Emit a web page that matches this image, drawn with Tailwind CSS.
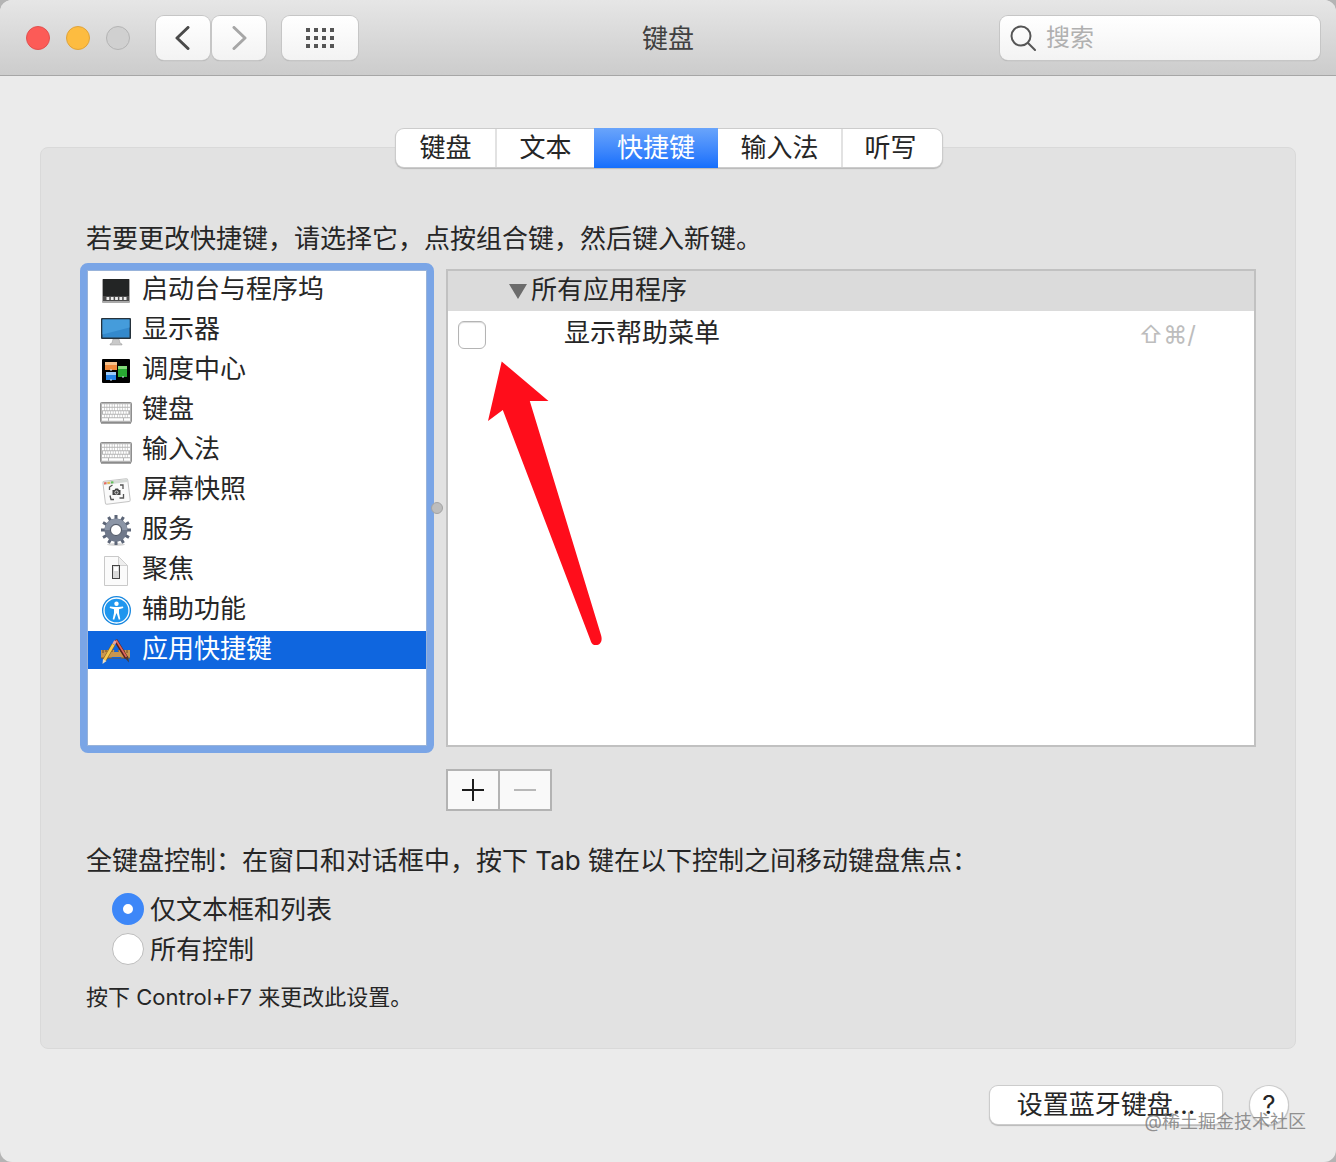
<!DOCTYPE html>
<html lang="zh-CN">
  <head>
    <meta charset="UTF-8" />
    <meta name="viewport" content="width=device-width, initial-scale=1.0" />
    <title>键盘</title>
    <!-- Tailwind CSS -->
    <script src="https://cdn.jsdelivr.net/npm/@tailwindcss/browser@4"></script>
  </head>
  <body class="bg-[#b4b4b4] font-['Inter','Noto_Sans_CJK_SC',sans-serif] text-[26px] leading-10 text-[#262626]">
    <div class="relative flex min-h-screen flex-col overflow-hidden rounded-xl bg-[#ebebeb]">
      <!-- Title bar -->
      <header class="grid h-[76px] grid-cols-[1fr_auto_1fr] items-center border-b border-[#a6a6a6] bg-linear-to-b from-[#e6e6e6] to-[#cccccc] px-4 pt-px">
        <div class="ml-[10px] flex items-center">
          <div class="flex gap-4">
            <button aria-label="关闭" class="size-6 rounded-full border border-[#e2504f] bg-[#fc5b57]"></button>
            <button aria-label="最小化" class="size-6 rounded-full border border-[#e0a33a] bg-[#fdbc40]"></button>
            <button aria-label="缩放" disabled class="size-6 rounded-full border border-[#b4b4b4] bg-[#d0d0d0]"></button>
          </div>
          <div class="ml-[26px] flex gap-[2px]">
            <button aria-label="后退" class="flex h-11 w-[54px] items-center justify-center rounded-lg bg-linear-to-b from-white to-[#f3f3f3] shadow-[0_0_0_1px_#c6c6c6,0_1px_1px_0_#a0a0a0]">
              <svg class="size-6" viewBox="0 0 24 24" fill="none" stroke="#4a4a4a" stroke-width="3" stroke-linecap="round" stroke-linejoin="round"><path d="M17 1.500 6 12l11 10.500" /></svg>
            </button>
            <button aria-label="前进" disabled class="flex h-11 w-[54px] items-center justify-center rounded-lg bg-linear-to-b from-white to-[#f3f3f3] shadow-[0_0_0_1px_#c6c6c6,0_1px_1px_0_#a0a0a0]">
              <svg class="size-6" viewBox="0 0 24 24" fill="none" stroke="#a6a6a6" stroke-width="3" stroke-linecap="round" stroke-linejoin="round"><path d="m7 1.500 11 10.500L7 22.500" /></svg>
            </button>
          </div>
          <button aria-label="显示全部" class="ml-4 flex h-11 w-[76px] items-center justify-center rounded-lg bg-linear-to-b from-white to-[#f3f3f3] shadow-[0_0_0_1px_#c6c6c6,0_1px_1px_0_#a0a0a0]">
            <svg class="h-5 w-7" viewBox="0 0 28 20" fill="#555555">
              <path d="M0 0h4v4H0zM8 0h4v4H8zM16 0h4v4h-4zM24 0h4v4h-4zM0 8h4v4H0zM8 8h4v4H8zM16 8h4v4h-4zM24 8h4v4h-4zM0 16h4v4H0zM8 16h4v4H8zM16 16h4v4h-4zM24 16h4v4h-4z" />
            </svg>
          </button>
        </div>
        <h1 class="pt-[2px] text-[#404040]">键盘</h1>
        <label class="flex h-11 w-80 items-center gap-[10px] justify-self-end rounded-lg bg-linear-to-b from-white to-[#f3f3f3] pl-[10px] shadow-[0_0_0_1px_#c6c6c6,0_1px_1px_0_#a0a0a0]">
          <svg class="size-[26px] shrink-0" viewBox="0 0 26 26" fill="none" stroke="#555555" stroke-width="2"><circle cx="11" cy="11" r="9.500" /><path d="m18 18 7 7" stroke-linecap="round" /></svg>
          <input type="search" placeholder="搜索" aria-label="搜索" class="w-full min-w-0 bg-transparent text-[24px] leading-9 outline-none placeholder:text-[#b0b0b0]" />
        </label>
      </header>

      <main class="px-10 pt-[53px]">
        <!-- Tabs -->
        <div role="tablist" class="relative z-10 flex justify-center pl-[2px]">
          <div class="flex h-[38px] rounded-lg bg-white leading-[38px] shadow-[0_0_0_1px_#cccccc,0_1px_1px_1px_#b8b8b8]">
            <button role="tab" class="w-[101px] border-r-2 border-[#e2e2e2]">键盘</button>
            <button role="tab" class="w-[97px]">文本</button>
            <button role="tab" aria-selected="true" class="-my-px w-[124px] bg-linear-to-b from-[#69a4fb] to-[#136efc] text-white">快捷键</button>
            <button role="tab" class="w-[125px] border-r-2 border-[#e2e2e2]">输入法</button>
            <button role="tab" class="w-[99px] pr-1">听写</button>
          </div>
        </div>

        <section class="-mt-5 rounded-lg border border-[#d9d9d9] bg-[#e2e2e2] px-[39px] pt-[71px] pb-[31px]">
          <p class="pl-[6px]">若要更改快捷键，请选择它，点按组合键，然后键入新键。</p>

          <div class="mt-1 flex">
            <!-- Category list -->
            <div class="h-[490px] w-[354px] shrink-0 rounded-lg border-[7px] border-[#7aa5e6]">
              <ul class="flex h-full flex-col gap-[2px] border border-[#98b3da] bg-white">
                <li>
                  <button class="flex h-[38px] w-full items-center gap-[10px] pl-3">
                    <svg class="size-8" viewBox="0 0 32 32">
                      <rect x="2" y="5" width="28" height="24" rx="1" fill="#a9a9a9" />
                      <rect x="3" y="5" width="26" height="22" fill="#232525" />
                      <path d="M3 22h26v5H3z" fill="#4c4c4c" />
                      <path d="M6.500 24.500h20" stroke="#eeeeee" stroke-width="3" stroke-dasharray="2.800 1.500" />
                    </svg>
                    <span class="pb-[2px]">启动台与程序坞</span>
                  </button>
                </li>
                <li>
                  <button class="flex h-[38px] w-full items-center gap-[10px] pl-3">
                    <svg class="size-8" viewBox="0 0 32 32">
                      <path d="M13 25h6l1 4 2 1v1H10v-1l2-1z" fill="#c9c9c9" stroke="#999999" stroke-width=".5" />
                      <rect x="1" y="4" width="30" height="21" rx="1" fill="#26323b" />
                      <path d="M2.500 5.500h27v18h-27z" fill="#3389cc" />
                      <path d="M2.500 5.500h27v8l-27 7z" fill="#459cdb" />
                    </svg>
                    <span class="pb-[2px]">显示器</span>
                  </button>
                </li>
                <li>
                  <button class="flex h-[38px] w-full items-center gap-[10px] pl-3">
                    <svg class="size-8" viewBox="0 0 32 32">
                      <rect x="2" y="5" width="28" height="24" rx="1" fill="#000000" />
                      <path d="M5 8h12v8H5z" fill="#ef8a3c" /><path d="M5 8h12v3H5z" fill="#f5c08b" />
                      <path d="M6 18h10v8H6z" fill="#2684e8" /><path d="M6 18h10v3H6z" fill="#9ccbfa" />
                      <path d="M18 12h9v11h-9z" fill="#28a832" /><path d="M18 12h9v3h-9z" fill="#85db7b" />
                      <path d="M10 15.500h2v1h-2zM10 25.500h2v1h-2zM22 22.500h2v1h-2z" fill="#d6e6f5" />
                    </svg>
                    <span class="pb-[2px]">调度中心</span>
                  </button>
                </li>
                <li>
                  <button class="flex h-[38px] w-full items-center gap-[10px] pl-3">
                    <svg class="size-8" viewBox="0 0 32 32">
                      <rect x=".5" y="8.500" width="31" height="20" rx="1" fill="#b5b5b5" stroke="#8f8f8f" />
                      <path d="M1 29h30" stroke="#8a8a8a" stroke-width="1.500" />
                      <path d="M2 11.500h28M2 15h28M3 18.500h26M2 22h28" stroke="#ffffff" stroke-width="2.400" stroke-dasharray="2 .6" />
                      <path d="M2 25.500h6m1 0h14m1 0h6" stroke="#ffffff" stroke-width="2.400" />
                    </svg>
                    <span class="pb-[2px]">键盘</span>
                  </button>
                </li>
                <li>
                  <button class="flex h-[38px] w-full items-center gap-[10px] pl-3">
                    <svg class="size-8" viewBox="0 0 32 32">
                      <rect x=".5" y="8.500" width="31" height="20" rx="1" fill="#b5b5b5" stroke="#8f8f8f" />
                      <path d="M1 29h30" stroke="#8a8a8a" stroke-width="1.500" />
                      <path d="M2 11.500h28M2 15h28M3 18.500h26M2 22h28" stroke="#ffffff" stroke-width="2.400" stroke-dasharray="2 .6" />
                      <path d="M2 25.500h6m1 0h14m1 0h6" stroke="#ffffff" stroke-width="2.400" />
                    </svg>
                    <span class="pb-[2px]">输入法</span>
                  </button>
                </li>
                <li>
                  <button class="flex h-[38px] w-full items-center gap-[10px] pl-3">
                    <svg class="size-8" viewBox="0 0 32 32" fill="none">
                      <g transform="rotate(-7 16 17)">
                        <rect x="4" y="6" width="25" height="23" rx="1.500" fill="#fafafa" stroke="#c4c4c4" />
                        <path d="M4.500 6.500h24v3h-24z" fill="#d5d9d6" />
                        <path d="M5 8h2.500" stroke="#ea6a5e" stroke-width="2" /><path d="M8.500 8H11" stroke="#e5ba50" stroke-width="2" /><path d="M12 8h2.500" stroke="#5fc058" stroke-width="2" />
                      </g>
                      <path d="M9.500 16v-3l3-2M20 11h3v4M23.500 20v4h-4M14 25.500h-3l-1-4" stroke="#555555" stroke-width="1.300" />
                      <path d="M12.500 16h2l1-1.500h2.500l1 1.500h1.500v5h-8z" fill="#444444" />
                      <circle cx="16.500" cy="18.500" r="1.600" stroke="#dddddd" />
                    </svg>
                    <span class="pb-[2px]">屏幕快照</span>
                  </button>
                </li>
                <li>
                  <button class="flex h-[38px] w-full items-center gap-[10px] pl-3">
                    <svg class="size-8" viewBox="0 0 32 32" fill="none">
                      <ellipse cx="16" cy="30.500" rx="9" ry="1.500" fill="#d5d5d5" />
                      <!-- Gear teeth, mirrored through the hub -->
                      <g stroke="#5c6577" stroke-width="3">
                        <path d="M16 1v30M1 16h30" />
                        <path d="M16 1v30M1 16h30" transform="rotate(30 16 16)" />
                        <path d="M16 1v30M1 16h30" transform="rotate(60 16 16)" />
                      </g>
                      <circle cx="16" cy="16" r="8.500" stroke="#6f788a" stroke-width="6" />
                      <path d="M7.300 16a8.700 8.700 0 0 1 17.400 0" stroke="#8b95a6" stroke-width="5" />
                      <circle cx="16" cy="16" r="5.500" fill="#ffffff" stroke="#4d5563" />
                    </svg>
                    <span class="pb-[2px]">服务</span>
                  </button>
                </li>
                <li>
                  <button class="flex h-[38px] w-full items-center gap-[10px] pl-3">
                    <svg class="size-8" viewBox="0 0 32 32">
                      <path d="M4.500 2.500h14l9 9v20h-23z" fill="#fbfbfb" stroke="#c9c9c9" />
                      <path d="M18.500 2.500v9h9z" fill="#eeeeee" stroke="#cfcfcf" />
                      <rect x="12.500" y="11.500" width="7" height="13" fill="#dadada" stroke="#444444" />
                      <path d="M14 13h4v4h-4z" fill="#ffffff" />
                    </svg>
                    <span class="pb-[2px]">聚焦</span>
                  </button>
                </li>
                <li>
                  <button class="flex h-[38px] w-full items-center gap-[10px] pl-3">
                    <svg class="size-8" viewBox="0 0 32 32">
                      <circle cx="16.500" cy="16.500" r="14.500" fill="#1787df" />
                      <circle cx="16.500" cy="16.500" r="12.500" fill="#1f96ee" stroke="#ffffff" stroke-width="1.300" />
                      <circle cx="16.500" cy="9.700" r="2.200" fill="#ffffff" />
                      <path d="m10 12.500 4.500.500h4l4.500-.500.300 1.500-4.300 1.300v3.700l1.300 6.300-1.500.400-2-6.200h-.6l-2 6.200-1.500-.400 1.300-6.300v-3.700l-4.300-1.300z" fill="#ffffff" />
                    </svg>
                    <span class="pb-[2px]">辅助功能</span>
                  </button>
                </li>
                <li>
                  <button aria-current="true" class="flex h-[38px] w-full items-center gap-[10px] bg-[#0f66df] pl-3 text-white">
                    <svg class="size-8" viewBox="0 0 32 32" fill="none">
                      <path d="M1 16h29v8H1z" fill="#c9964f" />
                      <path d="M3 16v3m3-3v2m3-2v3m3-3v2m3-2v3m3-3v2m3-2v3m3-3v2m3-2v3" stroke="#6e4b23" />
                      <path d="M1 24h29" stroke="#7d592c" />
                      <path d="M11.500 24 16 13l5.500 11z" fill="#0f66df" />
                      <path d="M8 18h16v5H8z" fill="#c9964f" />
                      <path d="m15.500 6 11 18" stroke="#58201d" stroke-width="3.600" />
                      <path d="m16 6 10.500 17" stroke="#df665d" stroke-width="1.600" />
                      <path d="m25 24 3-2 1 6.500z" fill="#493a37" />
                      <path d="M13.500 10.500 4.500 26" stroke="#8c601c" stroke-width="3.800" />
                      <path d="M13.500 10.500 4.500 26" stroke="#f6c84f" stroke-width="2.600" />
                      <path d="m3 25 3.500 2-4 3z" fill="#f0dfc0" />
                      <path d="m12.300 9.500 2-3.300 2.400 1.500-1.800 3.300z" fill="#eba6a0" />
                    </svg>
                    <span class="pb-[2px]">应用快捷键</span>
                  </button>
                </li>
              </ul>
            </div>

            <!-- Splitter handle -->
            <div class="relative w-3 shrink-0">
              <span class="absolute top-[239px] -left-[3px] size-3 rounded-full border border-[#a3a3a3] bg-[#bdbdbd]"></span>
            </div>

            <!-- Shortcut list -->
            <div class="relative my-[6px] min-w-0 flex-1 border-2 border-[#c1c1c1] bg-white">
              <button aria-expanded="true" class="flex h-10 w-full items-center gap-1 bg-[#dbdbdb] pl-[61px]">
                <svg class="h-4 w-[18px]" viewBox="0 0 18 16" fill="#6c6c6c"><path d="M0 1h18L9 16z" /></svg>
                <span class="pb-[2px]">所有应用程序</span>
              </button>
              <div class="flex h-12 items-center pr-[58px] pl-[10px]">
                <input id="help-menu" type="checkbox" class="size-7 appearance-none rounded-md border border-[#b4b4b4] bg-white shadow-[inset_0_1px_1px_#dddddd]" />
                <label for="help-menu" class="flex-1 pb-1 pl-[78px]">显示帮助菜单</label>
                <span class="text-[24px] text-[#bdbdbd]">⇧⌘/</span>
              </div>
              <svg class="absolute top-[90px] left-10 h-[285px] w-[114px]" viewBox="488 361 114 285" fill="#ff0d1b">
                <path d="m501.700 361.500 46.800 39.500h-18.700l71.200 234c2 6-1 10-5 10s-4.500-2-6-6L502.800 410l-14.800 11z" />
              </svg>
            </div>
          </div>

          <div class="mt-4 ml-[366px] flex">
            <button aria-label="添加" class="flex h-[42px] w-[54px] items-center justify-center border-2 border-[#b3b3b3] bg-[#f9f9f9]">
              <svg class="size-[22px]" viewBox="0 0 22 22" fill="#1c1c1c"><path d="M10 0h2v10h10v2H12v10h-2V12H0v-2h10z" /></svg>
            </button>
            <button aria-label="移除" disabled class="-ml-[2px] flex h-[42px] w-[54px] items-center justify-center border-2 border-[#b3b3b3] bg-[#f9f9f9]">
              <svg class="size-[22px]" viewBox="0 0 22 22" fill="#b8b8b8"><path d="M0 10h22v2H0z" /></svg>
            </button>
          </div>

          <!-- Full keyboard access -->
          <fieldset class="mt-[30px] pl-[6px]">
            <legend>全键盘控制：在窗口和对话框中，按下 Tab 键在以下控制之间移动键盘焦点：</legend>
            <div class="mt-2 pl-[26px]">
              <label class="flex h-10 items-center gap-[6px]">
                <input type="radio" name="access" checked class="size-8 appearance-none rounded-full border border-[#bdbdbd] bg-white checked:border-[11px] checked:border-[#3d87f8]" />
                <span class="pt-[2px]">仅文本框和列表</span>
              </label>
              <label class="flex h-10 items-center gap-[6px]">
                <input type="radio" name="access" class="size-8 appearance-none rounded-full border border-[#bdbdbd] bg-white checked:border-[11px] checked:border-[#3d87f8]" />
                <span class="pt-[2px]">所有控制</span>
              </label>
            </div>
          </fieldset>
          <p class="mt-2 pl-[6px] text-[22px]">按下 Control+F7 来更改此设置。</p>
        </section>
      </main>

      <!-- Footer -->
      <footer class="flex justify-end gap-7 pt-[37px] pr-12 pb-9">
        <button class="h-[38px] w-[232px] rounded-lg bg-white leading-[38px] shadow-[0_0_0_1px_#cccccc,0_1px_1px_1px_#b8b8b8]">设置蓝牙键盘...</button>
        <button aria-label="帮助" class="size-[38px] rounded-full bg-white leading-[38px] shadow-[0_0_0_1px_#cccccc,0_1px_1px_1px_#b8b8b8]">?</button>
      </footer>
      <span class="absolute right-[30px] bottom-6 text-[18px] leading-8 text-[#777777]/80">@稀土掘金技术社区</span>
    </div>
  </body>
</html>
